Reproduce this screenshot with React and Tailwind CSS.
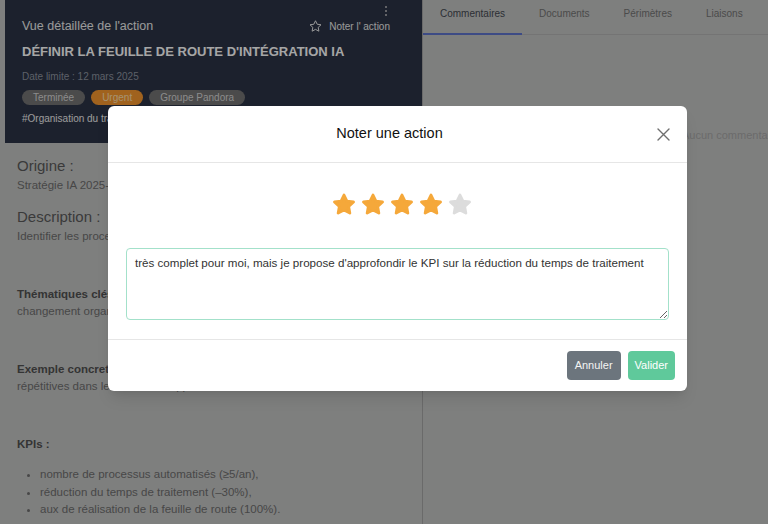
import React from "react";

const STAR = "M12 2.8l2.7 5.6 6.1.8-4.5 4.2 1.1 6.1L12 16.6l-5.4 2.9 1.1-6.1-4.5-4.2 6.1-.8z";

function Star({ filled }) {
  const c = filled ? "#f5a83a" : "#dcdcdc";
  return (
    <svg width="26" height="26" viewBox="0 0 24 24">
      <path d={STAR} fill={c} stroke={c} strokeWidth="2.6" strokeLinejoin="round" />
    </svg>
  );
}

export default function App() {
  return (
    <div className="relative w-[768px] h-[524px] overflow-hidden bg-[#c2c3c2] font-['Liberation_Sans',Arial,sans-serif]">
      <div className="flex h-full">
        {/* Left column */}
        <div className="w-[422px] shrink-0 pl-[5px]">
          <div className="relative bg-[#2b3345] pl-[17px] pr-[32px] pt-[17px] pb-[18px]">
            <div className="absolute right-[35px] top-[6px] flex flex-col gap-[2px]">
              <span className="block w-[2px] h-[2px] rounded-full bg-[#bdbdbd]" />
              <span className="block w-[2px] h-[2px] rounded-full bg-[#bdbdbd]" />
              <span className="block w-[2px] h-[2px] rounded-full bg-[#bdbdbd]" />
            </div>
            <div className="flex items-center justify-between h-[16px] mt-[1px]">
              <span className="text-[12.5px] leading-[16px] text-[#ececec]">Vue détaillée de l'action</span>
              <span className="flex items-center gap-[6px] text-[10px] text-[#ececec]">
                <svg width="15" height="15" viewBox="0 0 24 24" fill="none">
                  <path d={STAR} stroke="#ececec" strokeWidth="1.6" strokeLinejoin="round" />
                </svg>
                Noter l' action
              </span>
            </div>
            <div className="mt-[10px] text-[13px] leading-[16px] font-bold text-white whitespace-nowrap">
              DÉFINIR LA FEUILLE DE ROUTE D'INTÉGRATION IA
            </div>
            <div className="mt-[10px] text-[10px] leading-[13px] text-[#8e94a0]">Date limite : 12 mars 2025</div>
            <div className="mt-[7px] flex gap-[6px]">
              <span className="h-[15px] px-[11px] rounded-full bg-[#737373] text-[10px] leading-[15px] text-[#d6d6d6]">Terminée</span>
              <span className="h-[15px] px-[11px] rounded-full bg-[#f6972e] text-[10px] leading-[15px] text-[#ffe0b0]">Urgent</span>
              <span className="h-[15px] px-[11px] rounded-full bg-[#737373] text-[10px] leading-[15px] text-[#d6d6d6]">Groupe Pandora</span>
            </div>
            <div className="mt-[7px] text-[10px] leading-[13px] text-[#eeeeee] whitespace-nowrap">
              #Organisation du travail #IA #Transformation
            </div>
          </div>

          <div className="pl-[12px] pr-[12px] whitespace-nowrap overflow-hidden">
            <div className="mt-[14px] text-[15px] leading-[18px] text-[#5a5a5a]">Origine :</div>
            <div className="mt-[2px] text-[11.5px] leading-[17px] text-[#6e6e6e]">Stratégie IA 2025-2026 du groupe</div>
            <div className="mt-[14px] text-[15px] leading-[18px] text-[#5a5a5a]">Description :</div>
            <div className="mt-[2px] text-[11.5px] leading-[17px] text-[#6e6e6e]">Identifier les processus pouvant bénéficier de l'IA</div>
            <div className="mt-[41px] text-[11.5px] leading-[17px] font-bold text-[#505050]">Thématiques clés :</div>
            <div className="text-[11.5px] leading-[17px] text-[#6e6e6e]">changement organisationnel, automatisation</div>
            <div className="mt-[41px] text-[11.5px] leading-[17px] font-bold text-[#505050]">Exemple concret :</div>
            <div className="text-[11.5px] leading-[17px] text-[#6e6e6e]">répétitives dans les services support</div>
            <div className="mt-[41px] text-[11.5px] leading-[17px] font-bold text-[#505050]">KPIs :</div>
            <ul className="mt-[13px] pl-[23px] list-disc text-[11.5px] leading-[17.5px] text-[#6e6e6e]">
              <li>nombre de processus automatisés (≥5/an),</li>
              <li>réduction du temps de traitement (–30%),</li>
              <li>aux de réalisation de la feuille de route (100%).</li>
            </ul>
          </div>
        </div>

        {/* Right column */}
        <div className="flex-1 min-w-0 border-l border-[#a3a3a3]">
          <div className="flex h-[35px] border-b border-[#b3b3b3]">
            <div className="px-[17px] pt-[7px] text-[10px] leading-[14px] text-[#444951] border-b-2 border-[#5e74cd] -mb-px">Commentaires</div>
            <div className="px-[17px] pt-[7px] text-[10px] leading-[14px] text-[#737373]">Documents</div>
            <div className="px-[17px] pt-[7px] text-[10px] leading-[14px] text-[#737373]">Périmètres</div>
            <div className="px-[17px] pt-[7px] text-[10px] leading-[14px] text-[#737373]">Liaisons</div>
          </div>
          <div className="pt-[93px] pl-[259px] text-[11px] leading-[14px] text-[#a5a5a5] whitespace-nowrap overflow-hidden">Aucun commentaire</div>
        </div>
      </div>

      {/* Overlay */}
      <div className="absolute inset-0 bg-black/35">
        <div className="absolute left-[108px] top-[106px] w-[579px] rounded-[6px] bg-white shadow-lg">
          <div className="flex items-center h-[57px] px-4 border-b border-[#e6e6e6]">
            <div className="flex-1 text-center text-[14.5px] text-[#111]">Noter une action</div>
            <button className="w-4 h-4 flex items-center justify-center">
              <svg width="13" height="13" viewBox="0 0 13 13">
                <path d="M1 1L12 12M12 1L1 12" stroke="#6f6f6f" strokeWidth="1.4" strokeLinecap="round" />
              </svg>
            </button>
          </div>
          <div className="px-[18px] pt-[29px] pb-[19px]">
            <div className="flex justify-center gap-[3px] pl-2">
              <Star filled />
              <Star filled />
              <Star filled />
              <Star filled />
              <Star />
            </div>
            <textarea
              className="mt-[30px] block w-full h-[72px] rounded-[4px] border border-[#a3e1ca] px-2 pt-[6px] text-[11.6px] leading-[16px] text-[#333] outline-none font-['Liberation_Sans',Arial,sans-serif]"
              defaultValue="très complet pour moi, mais je propose d'approfondir le KPI sur la réduction du temps de traitement"
            />
          </div>
          <div className="flex justify-end items-center gap-[7px] h-[52px] pr-3 border-t border-[#e6e6e6]">
            <button className="h-[29px] px-2 rounded-[4px] bg-[#6c757d] text-[11px] text-[#f4f4f4]">Annuler</button>
            <button className="h-[29px] px-[7px] rounded-[4px] bg-[#5fc99b] text-[11px] text-white">Valider</button>
          </div>
        </div>
      </div>
    </div>
  );
}
